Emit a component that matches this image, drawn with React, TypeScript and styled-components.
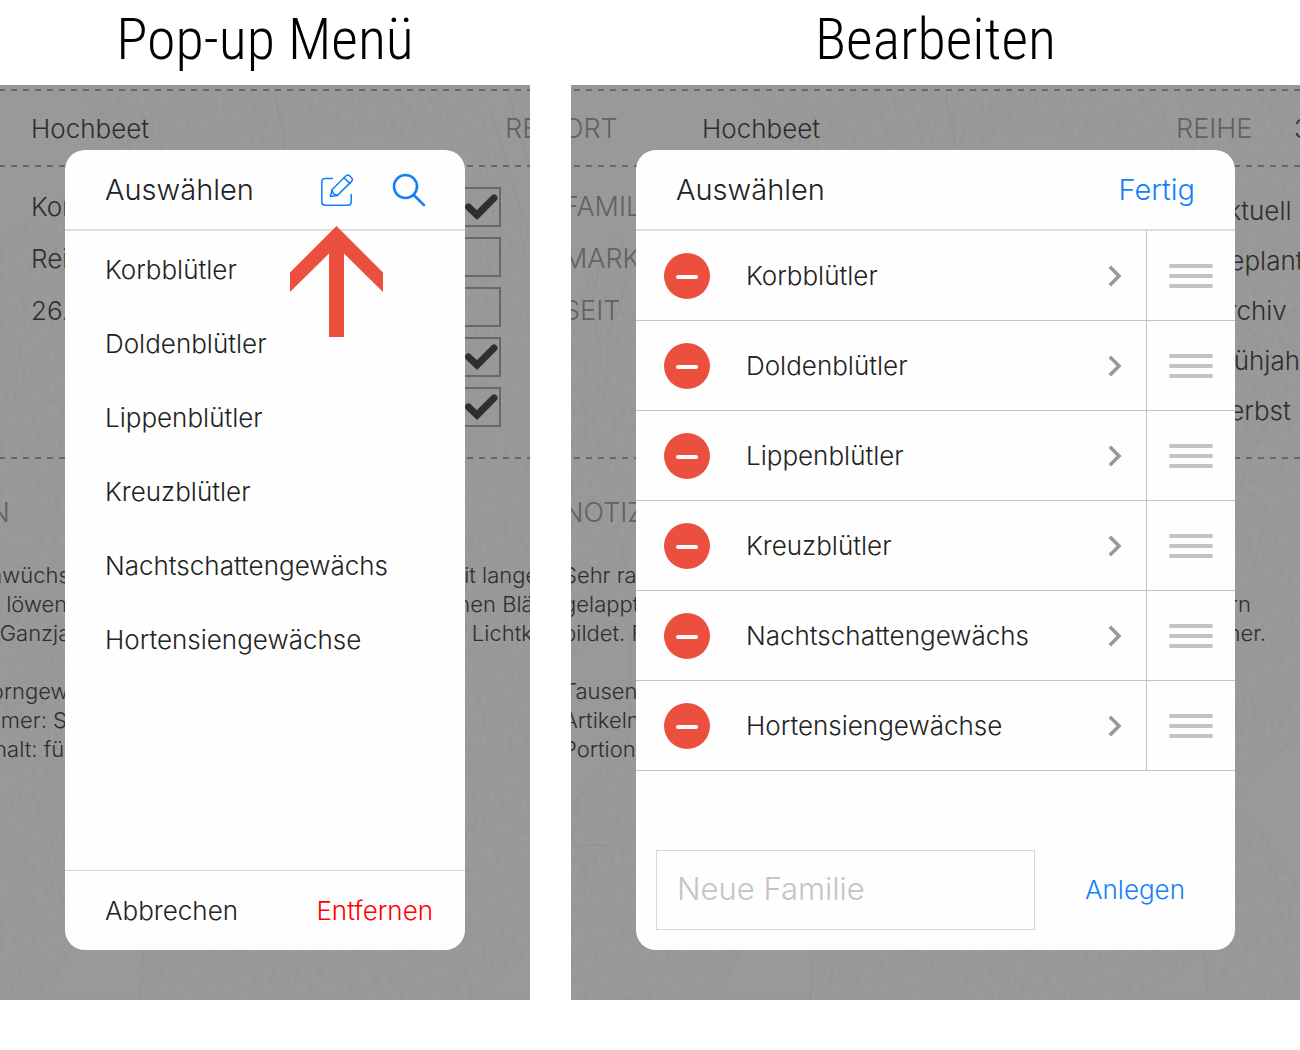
import React from "react";
import styled, { createGlobalStyle } from "styled-components";

const families = [
  "Korbblütler",
  "Doldenblütler",
  "Lippenblütler",
  "Kreuzblütler",
  "Nachtschattengewächs",
  "Hortensiengewächse",
];

const phases = [
  { name: "Aktuell", on: true },
  { name: "Geplant", on: false },
  { name: "Archiv", on: false },
  { name: "Frühjahr", on: true },
  { name: "Herbst", on: true },
];

const notes: [string, string][] = [
  ["Sehr raschwüchsige Rauke", "mit langen,"],
  ["gelappten, löwenzahnartigen", "chen Blättern"],
  ["bildet. Für Ganzjahresanbau", "er Lichtkeimer."],
  ["", ""],
  ["Tausendkorngewicht: 2 g", ""],
  ["Artikelnummer: S 112", ""],
  ["Portionsinhalt: für 5 m", ""],
];

const GlobalStyle = createGlobalStyle`
  *, *::before, *::after { box-sizing: border-box; }
  body {
    margin: 0;
    background: #fff;
    color: #222;
    font: 300 26px/32px Inter, "Liberation Sans", sans-serif;
  }
  button, input { font: inherit; color: inherit; margin: 0; }
  ul, p, h1, h2 { margin: 0; padding: 0; font-weight: inherit; }
  ul { list-style: none; }
`;

const Page = styled.main`
  display: grid;
  grid-template-columns: minmax(0, 530fr) minmax(0, 729fr);
  column-gap: 41px;
  padding-bottom: 50px;
`;

const Title = styled.h1`
  height: 85px;
  color: #000;
  font: 350 58px/78px "Roboto Condensed", "Liberation Sans", sans-serif;
  text-align: center;
`;

const Stage = styled.div`
  display: grid;
  grid-template: minmax(0, 1fr) / minmax(0, 1fr);
  overflow: hidden;
  background: #969696;

  > * { grid-area: 1 / 1; }
`;

const TextureSvg = styled.svg`
  width: 100%;
  height: 100%;
  min-height: 0;
`;

const Sheet = styled.div<{ $shift: number }>`
  min-width: 820px;
  margin-left: ${(p) => -p.$shift}px;
  padding-top: 4px;
  color: #2e2e2e;
`;

const Dashes = styled.div`
  height: 2px;
  background: repeating-linear-gradient(
    90deg, #686868 0 5px, transparent 5px 11px, #686868 11px 12px
  );
`;

const PlaceRow = styled.div`
  display: grid;
  grid-template-columns: 139px 474px 118px auto;
  align-items: center;
  height: 74px;
  padding-top: 2px;
`;

const DetailRow = styled.div`
  display: grid;
  grid-template-columns: 139px 430px auto;
  height: 290px;
  padding-top: 14px;
`;

const Field = styled.div`
  line-height: 52px;
`;

const Muted = styled.span`
  color: #626262;
  font-size: 27px;
`;

const Phase = styled.label`
  display: flex;
  align-items: center;
  gap: 38px;
  height: 50px;
`;

const PhaseList = styled.div`
  padding-top: 1px;
`;

const PhaseName = styled.span`
  padding-top: 8px;
`;

const BoxWrap = styled.span`
  display: grid;

  > * { grid-area: 1 / 1; }
`;

const Box = styled.input`
  appearance: none;
  width: 40px;
  height: 40px;
  border: 2px solid #686868;
`;

const Notes = styled.section`
  padding-top: 28px;
`;

const NotesTitle = styled.h2`
  margin-bottom: 21px;
  color: #626262;
  font-size: 27px;
  line-height: 52px;
`;

const NoteLine = styled.p`
  display: grid;
  grid-template-columns: 553px auto;
  height: 29px;
  font-size: 22px;
  line-height: 30px;
`;

const Dialog = styled.section`
  position: relative;
  display: flex;
  flex-direction: column;
  min-height: 800px;
  margin: 65px 65px 50px;
  border-radius: 20px;
  background: #fefefe;
`;

const DialogHead = styled.header`
  display: flex;
  align-items: center;
  gap: 40px;
  height: 81px;
  padding: 0 40px;
  border-bottom: 2px solid #dcdcdc;
`;

const DialogTitle = styled.h2`
  flex: 1;
  font-size: 29px;
`;

const TextButton = styled.button<{ $tone?: string; $large?: boolean }>`
  padding: 0;
  border: 0;
  background: none;
  color: ${(p) => p.$tone ?? "#222"};
  font-size: ${(p) => (p.$large ? 29 : 26)}px;
  text-align: left;
  cursor: pointer;
`;

const IconButton = styled.button`
  display: flex;
  padding: 0;
  border: 0;
  background: none;
  color: #147efb;
  cursor: pointer;
`;

const PickList = styled.ul`
  flex: 1;
  padding-top: 2px;
`;

const PickItem = styled.li`
  display: flex;
  align-items: center;
  height: 74px;
  padding: 0 40px;
`;

const DialogFoot = styled.footer`
  display: flex;
  align-items: center;
  justify-content: space-between;
  height: 80px;
  padding: 0 32px 0 40px;
  border-top: 1px solid #d4d4d4;
`;

const Pointer = styled.svg`
  position: absolute;
  top: 76px;
  left: 225px;
`;

const EditList = styled.ul`
  flex: 1;
`;

const EditRow = styled.li`
  display: flex;
  height: 90px;
  border-bottom: 1px solid #c4c4c4;
`;

const EditMain = styled.div`
  display: flex;
  flex: 1;
  align-items: center;
  padding: 0 24px 0 28px;
`;

const RemoveButton = styled.button`
  display: grid;
  place-items: center;
  width: 46px;
  height: 46px;
  padding: 2px 0 0;
  border: 0;
  border-radius: 50%;
  background: #eb4f3e;
  cursor: pointer;

  &::before {
    content: "";
    width: 22px;
    height: 4px;
    border-radius: 2px;
    background: #fff;
  }
`;

const OpenButton = styled.button`
  display: flex;
  flex: 1;
  align-items: center;
  justify-content: space-between;
  padding: 0 0 0 36px;
  border: 0;
  background: none;
  text-align: left;
  cursor: pointer;
`;

const DragButton = styled.button`
  display: flex;
  flex-direction: column;
  align-items: center;
  justify-content: center;
  gap: 6px;
  width: 89px;
  padding: 0;
  border: 0;
  border-left: 1px solid #c4c4c4;
  background: none;
  cursor: grab;
`;

const Bar = styled.span`
  width: 44px;
  height: 4px;
  border-radius: 2px;
  background: #c2c2c2;
`;

const AddForm = styled.form`
  display: flex;
  align-items: center;
  gap: 50px;
  padding: 0 50px 20px 20px;
`;

const NameInput = styled.input`
  flex: 1;
  min-width: 0;
  height: 80px;
  padding: 0 20px 4px;
  border: 1px solid #d8d8d8;
  border-radius: 0;
  background: none;
  font-size: 31px;
  outline: none;

  &::placeholder { color: #c4c4c4; opacity: 1; }
`;

function Texture({ id }: { id: string }) {
  return (
    <TextureSvg viewBox="0 0 730 915" preserveAspectRatio="xMidYMid slice" aria-hidden="true">
      <filter id={id} x="0" y="0" width="100%" height="100%">
        <feTurbulence type="fractalNoise" baseFrequency="0.22 0.1" numOctaves="3" seed="8" />
        <feColorMatrix values="0 0 0 0 0.4  0 0 0 0 0.4  0 0 0 0 0.4  0.4 0 0 0 -0.08" />
      </filter>
      <rect width="730" height="915" filter={`url(#${id})`} />
      <g fill="#999" stroke="#8d8d8d" strokeOpacity=".5">
        <path d="M0 0h180l24 44 38 52-66 10-90 60-60 14-26 60z" />
        <path d="M452 80q20 20 18 60l-90 10q10-60 72-70z" />
        <path d="M590 20q-22-20 0-20h18l10 50 34 90-24 10q-20-70-38-130z" />
        <path d="M0 570l60-40v120l-50 60-10 8z" />
        <path d="M145 915l40-80 110 10-50-10-5 80z" />
        <path d="M660 720l30 26 40 60V650l-34 28z" />
        <path d="M570 915l50-40 12-25 6 65z" />
      </g>
      <g fill="none" stroke="#8c8c8c" strokeOpacity=".6">
        <path d="M375 10q10 40 14 90M200 30q26 20 34 60M30 260q40-60 18-110q-40 50-18 110" />
        <path d="M664 270q50-50 66-44M700 330l-30 70 26 20-12 60M0 760h40l30 10" />
      </g>
    </TextureSvg>
  );
}

function Check() {
  return (
    <svg width="40" height="40" fill="none" stroke="#2e2e2e" strokeWidth="7" strokeLinecap="round" aria-hidden="true">
      <path d="M7.500 20l8.500 8 17-17" />
    </svg>
  );
}

function EditIcon() {
  return (
    <svg width="32" height="32" fill="none" stroke="currentColor" strokeWidth="1.5" strokeLinecap="round" strokeLinejoin="round" overflow="visible" aria-hidden="true">
      <path d="M11.5 4.5H4Q.8 4.5.8 7.700V28.100Q.8 31.300 4 31.300H27Q30.200 31.300 30.200 28.100V20.500" />
      <path d="M9.500 22.500L11 15.800 25 1.800Q26.800.200 28.600 1.800L30.500 3.700Q32.300 5.500 30.600 7.400L16.400 21.400Z" />
      <path d="M11 15.800L12.400 19.800 16.400 21.400M23 3.800L28.800 9.400" />
    </svg>
  );
}

function SearchIcon() {
  return (
    <svg width="32" height="32" fill="none" stroke="currentColor" strokeWidth="2.600" strokeLinecap="round" overflow="visible" aria-hidden="true">
      <circle cx="12.500" cy="12.500" r="11.500" />
      <path d="M20.800 21L31 31.200" />
    </svg>
  );
}

function Chevron() {
  return (
    <svg width="14" height="22" fill="none" stroke="#999" strokeWidth="3.600" aria-hidden="true">
      <path d="M1.800 1.800L11 11 1.800 20.200" />
    </svg>
  );
}

function GardenSheet({ shift }: { shift: number }) {
  return (
    <Sheet $shift={shift} inert>
      <Dashes />
      <PlaceRow>
        <Muted>ORT</Muted>
        <span>Hochbeet</span>
        <Muted>REIHE</Muted>
        <span>3</span>
      </PlaceRow>
      <Dashes />
      <DetailRow>
        <div>
          <Field><Muted>FAMILIE</Muted></Field>
          <Field><Muted>MARKE</Muted></Field>
          <Field><Muted>SEIT</Muted></Field>
        </div>
        <div>
          <Field>Korbblütler</Field>
          <Field>Reinsaat</Field>
          <Field>26.04.</Field>
        </div>
        <PhaseList>
          {phases.map((phase) => (
            <Phase key={phase.name}>
              <BoxWrap>
                <Box type="checkbox" defaultChecked={phase.on} />
                {phase.on && <Check />}
              </BoxWrap>
              <PhaseName>{phase.name}</PhaseName>
            </Phase>
          ))}
        </PhaseList>
      </DetailRow>
      <Dashes />
      <Notes>
        <NotesTitle>NOTIZEN</NotesTitle>
        {notes.map(([start, end], i) => (
          <NoteLine key={i}>
            <span>{start}</span>
            <span>{end}</span>
          </NoteLine>
        ))}
      </Notes>
    </Sheet>
  );
}

function PickDialog() {
  return (
    <Dialog role="dialog" aria-label="Auswählen">
      <DialogHead>
        <DialogTitle>Auswählen</DialogTitle>
        <IconButton type="button" aria-label="Bearbeiten"><EditIcon /></IconButton>
        <IconButton type="button" aria-label="Suchen"><SearchIcon /></IconButton>
      </DialogHead>
      <PickList>
        {families.map((name) => (
          <PickItem key={name}>
            <TextButton type="button">{name}</TextButton>
          </PickItem>
        ))}
      </PickList>
      <DialogFoot>
        <TextButton type="button">Abbrechen</TextButton>
        <TextButton type="button" $tone="#f00">Entfernen</TextButton>
      </DialogFoot>
      <Pointer width="93" height="111" fill="#eb4f3e" aria-hidden="true">
        <path d="M46.500 0L93 46.500V66L54 27.500V111H39V27.500L0 66V46.500Z" />
      </Pointer>
    </Dialog>
  );
}

function EditDialog() {
  return (
    <Dialog role="dialog" aria-label="Familien bearbeiten">
      <DialogHead>
        <DialogTitle>Auswählen</DialogTitle>
        <TextButton type="button" $tone="#147efb" $large>Fertig</TextButton>
      </DialogHead>
      <EditList>
        {families.map((name) => (
          <EditRow key={name}>
            <EditMain>
              <RemoveButton type="button" aria-label={`${name} entfernen`} />
              <OpenButton type="button">
                <span>{name}</span>
                <Chevron />
              </OpenButton>
            </EditMain>
            <DragButton type="button" aria-label={`${name} verschieben`}>
              <Bar />
              <Bar />
              <Bar />
            </DragButton>
          </EditRow>
        ))}
      </EditList>
      <AddForm onSubmit={(e) => e.preventDefault()}>
        <NameInput type="text" placeholder="Neue Familie" aria-label="Neue Familie" />
        <TextButton type="submit" $tone="#147efb">Anlegen</TextButton>
      </AddForm>
    </Dialog>
  );
}

export default function App() {
  return (
    <>
      <GlobalStyle />
      <Page>
        <section>
          <Title>Pop-up Menü</Title>
          <Stage>
            <Texture id="grain-pick" />
            <GardenSheet shift={108} />
            <PickDialog />
          </Stage>
        </section>
        <section>
          <Title>Bearbeiten</Title>
          <Stage>
            <Texture id="grain-edit" />
            <GardenSheet shift={8} />
            <EditDialog />
          </Stage>
        </section>
      </Page>
    </>
  );
}
